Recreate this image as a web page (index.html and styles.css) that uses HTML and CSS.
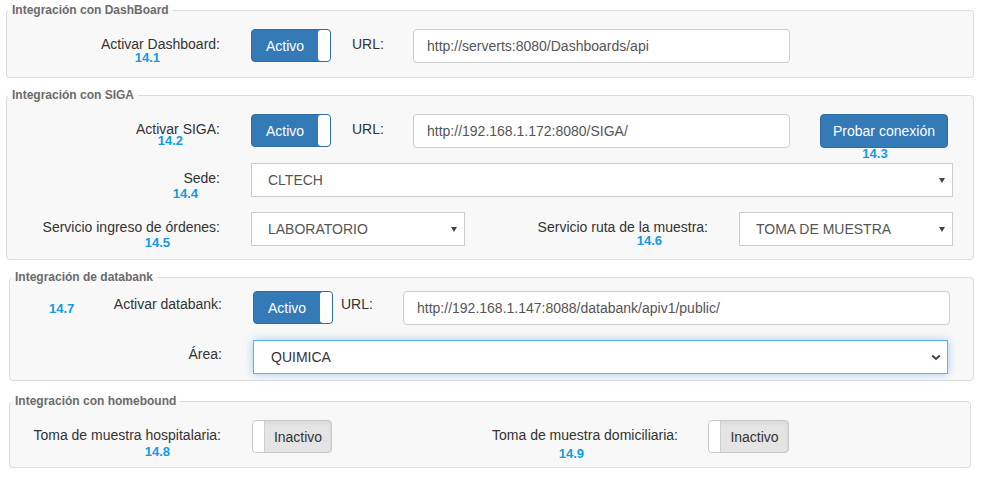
FILE: index.html
```html
<!DOCTYPE html>
<html lang="es">
<head>
<meta charset="utf-8">
<title>Integraciones</title>
<link rel="stylesheet" href="styles.css">
</head>
<body>
<div class="page">

  <fieldset class="fs fs1">
    <legend>Integración con DashBoard</legend>
    <div class="row">
      <div class="lbl">Activar Dashboard:<span class="num n1">14.1</span></div>
      <div class="toggle on"><span class="tg-text">Activo</span><span class="tg-handle"></span></div>
      <div class="url">URL:</div>
      <div class="input w-url1">http://serverts:8080/Dashboards/api</div>
    </div>
  </fieldset>

  <fieldset class="fs fs2">
    <legend>Integración con SIGA</legend>
    <div class="row">
      <div class="lbl">Activar SIGA:<span class="num n2">14.2</span></div>
      <div class="toggle on"><span class="tg-text">Activo</span><span class="tg-handle"></span></div>
      <div class="url">URL:</div>
      <div class="input w-url1">http://192.168.1.172:8080/SIGA/</div>
      <div class="btn-wrap">
        <div class="btn">Probar conexión</div>
        <span class="num n3">14.3</span>
      </div>
    </div>
    <div class="row">
      <div class="lbl">Sede:<span class="num n4">14.4</span></div>
      <div class="select w-full">CLTECH<span class="caret"></span></div>
    </div>
    <div class="row">
      <div class="lbl">Servicio ingreso de órdenes:<span class="num n5">14.5</span></div>
      <div class="select w-half">LABORATORIO<span class="caret"></span></div>
      <div class="lbl lbl-ruta">Servicio ruta de la muestra:<span class="num n6">14.6</span></div>
      <div class="select w-half">TOMA DE MUESTRA<span class="caret"></span></div>
    </div>
  </fieldset>

  <fieldset class="fs fs3">
    <legend>Integración de databank</legend>
    <div class="row">
      <div class="lbl lbl-db split"><span class="num-side">14.7</span><span>Activar databank:</span></div>
      <div class="toggle on"><span class="tg-text">Activo</span><span class="tg-handle"></span></div>
      <div class="url url-db">URL:</div>
      <div class="input w-url3">http://192.168.1.147:8088/databank/apiv1/public/</div>
    </div>
    <div class="row">
      <div class="lbl lbl-db lbl-area">Área:</div>
      <div class="select focus w-area">QUIMICA
        <svg class="chev" width="10" height="7" viewBox="0 0 10 7"><path d="M1.2 1.5 L5 5 L8.8 1.5" fill="none" stroke="#444" stroke-width="2"/></svg>
      </div>
    </div>
  </fieldset>

  <fieldset class="fs fs4">
    <legend>Integración con homebound</legend>
    <div class="row">
      <div class="lbl lbl-hb">Toma de muestra hospitalaria:<span class="num n8">14.8</span></div>
      <div class="toggle off"><span class="tg-handle"></span><span class="tg-text">Inactivo</span></div>
      <div class="lbl lbl-dom">Toma de muestra domiciliaria:<span class="num n9">14.9</span></div>
      <div class="toggle off t-dom"><span class="tg-handle"></span><span class="tg-text">Inactivo</span></div>
    </div>
  </fieldset>

</div>
</body>
</html>
```

FILE: styles.css
```css
* { box-sizing: border-box; }

body {
  margin: 0;
  background: #fff;
  font-family: "Liberation Sans", Arial, sans-serif;
  font-size: 14px;
  color: #333;
}

.page {
  padding: 3px 0 0 6px;
}

.fs {
  margin: 0;
  padding: 0;
  min-width: 0;
  border: 1px solid #dcdcdc;
  border-radius: 4px;
  background: #f8f8f8;
}

.fs legend {
  margin-left: 1px;
  padding: 0 4px;
  font-size: 12px;
  font-weight: bold;
  line-height: 14px;
  color: #6b6b6b;
}

.fs1 { width: 968px; margin-bottom: 10px; padding: 12px 0 14px; }
.fs2 { width: 968px; margin-bottom: 10px; padding: 12px 0 13px; }
.fs3 { width: 965px; margin: 0 0 13px 3px; padding: 7px 0 6px; }
.fs4 { width: 962px; margin-left: 3px; padding: 12px 0 13px; }

.row {
  display: flex;
  align-items: flex-start;
  height: 34px;
}
.row + .row { margin-top: 15px; }

.lbl {
  flex-shrink: 0;
  width: 213px;
  padding-top: 5px;
  line-height: 20px;
  text-align: right;
  white-space: nowrap;
}

.num {
  display: block;
  font-size: 13px;
  font-weight: bold;
  line-height: 14px;
  color: #139be2;
}
.n1 { padding-right: 60px; margin-top: -3px; }
.n2 { padding-right: 37px; margin-top: -5px; }
.n3 { text-align: center; padding-right: 18px; margin-top: -1px; }
.n4 { padding-right: 22px; margin-top: -1px; }
.n5 { padding-right: 50px; margin-top: -1px; }
.n6 { padding-right: 46px; margin-top: -3px; }
.n8 { padding-right: 51px; margin-top: 0; }
.n9 { padding-right: 94px; margin-top: 2px; }

/* toggles */
.toggle {
  flex-shrink: 0;
  display: flex;
  width: 80px;
  height: 33px;
  margin-left: 31px;
  border-radius: 4px;
  overflow: hidden;
}
.toggle.on {
  background: #337ab7;
  border: 1px solid #2e6da4;
}
.toggle.off {
  background: #e4e4e4;
  border: 1px solid #c6c6c6;
  box-shadow: inset 0 2px 4px rgba(0,0,0,.06);
}
.tg-text {
  flex: 1;
  display: flex;
  align-items: center;
  justify-content: center;
}
.toggle.on .tg-text { color: #fff; }
.toggle.off .tg-text { color: #333; }
.tg-handle {
  width: 12px;
  background: #fff;
}
.toggle.on .tg-handle { border-radius: 3px 0 0 3px; }
.toggle.off .tg-handle { border-right: 1px solid #cfcfcf; }

.url {
  flex-shrink: 0;
  width: 61px;
  margin-left: 21px;
  padding-top: 5px;
  line-height: 20px;
}

.input {
  flex-shrink: 0;
  height: 34px;
  display: flex;
  align-items: center;
  padding: 0 13px;
  background: #fff;
  border: 1px solid #ccc;
  border-radius: 4px;
  color: #555;
}
.w-url1 { width: 377px; }
.w-url3 { width: 547px; }

.btn-wrap {
  flex-shrink: 0;
  width: 128px;
  margin-left: 30px;
}
.btn {
  height: 34px;
  display: flex;
  align-items: center;
  justify-content: center;
  background: #337ab7;
  border: 1px solid #2e6da4;
  border-radius: 4px;
  color: #fff;
}

.select {
  flex-shrink: 0;
  height: 34px;
  display: flex;
  align-items: center;
  justify-content: space-between;
  margin-left: 31px;
  padding: 0 7px 0 16px;
  background: #fff;
  border: 1px solid #ccc;
  color: #555;
}
.w-full { width: 702px; }
.w-half { width: 214px; }
.w-area { width: 695px; padding-right: 6px; }

.caret {
  width: 0;
  height: 0;
  border-left: 3px solid transparent;
  border-right: 3px solid transparent;
  border-top: 5px solid #444;
}

.select.focus {
  border-color: #66afe9;
  box-shadow: inset 0 1px 1px rgba(0,0,0,.075), 0 0 8px rgba(102,175,233,.6);
  color: #333;
  padding-left: 17px;
}

.lbl-ruta { width: 243px; }

.lbl-db { width: 212px; padding-top: 3px; }
.lbl-area { padding-top: 4px; }
.split {
  display: flex;
  justify-content: space-between;
  padding-left: 39px;
}
.num-side {
  font-size: 13px;
  font-weight: bold;
  line-height: 14px;
  color: #139be2;
  margin-top: 8px;
}
.fs3 .toggle { margin-left: 31px; }
.url-db { margin-left: 8px; width: 62px; padding-top: 3px; }

.lbl-hb { width: 211px; }
.lbl-dom { width: 346px; }
.t-dom { margin-left: 30px; width: 81px; }
```
